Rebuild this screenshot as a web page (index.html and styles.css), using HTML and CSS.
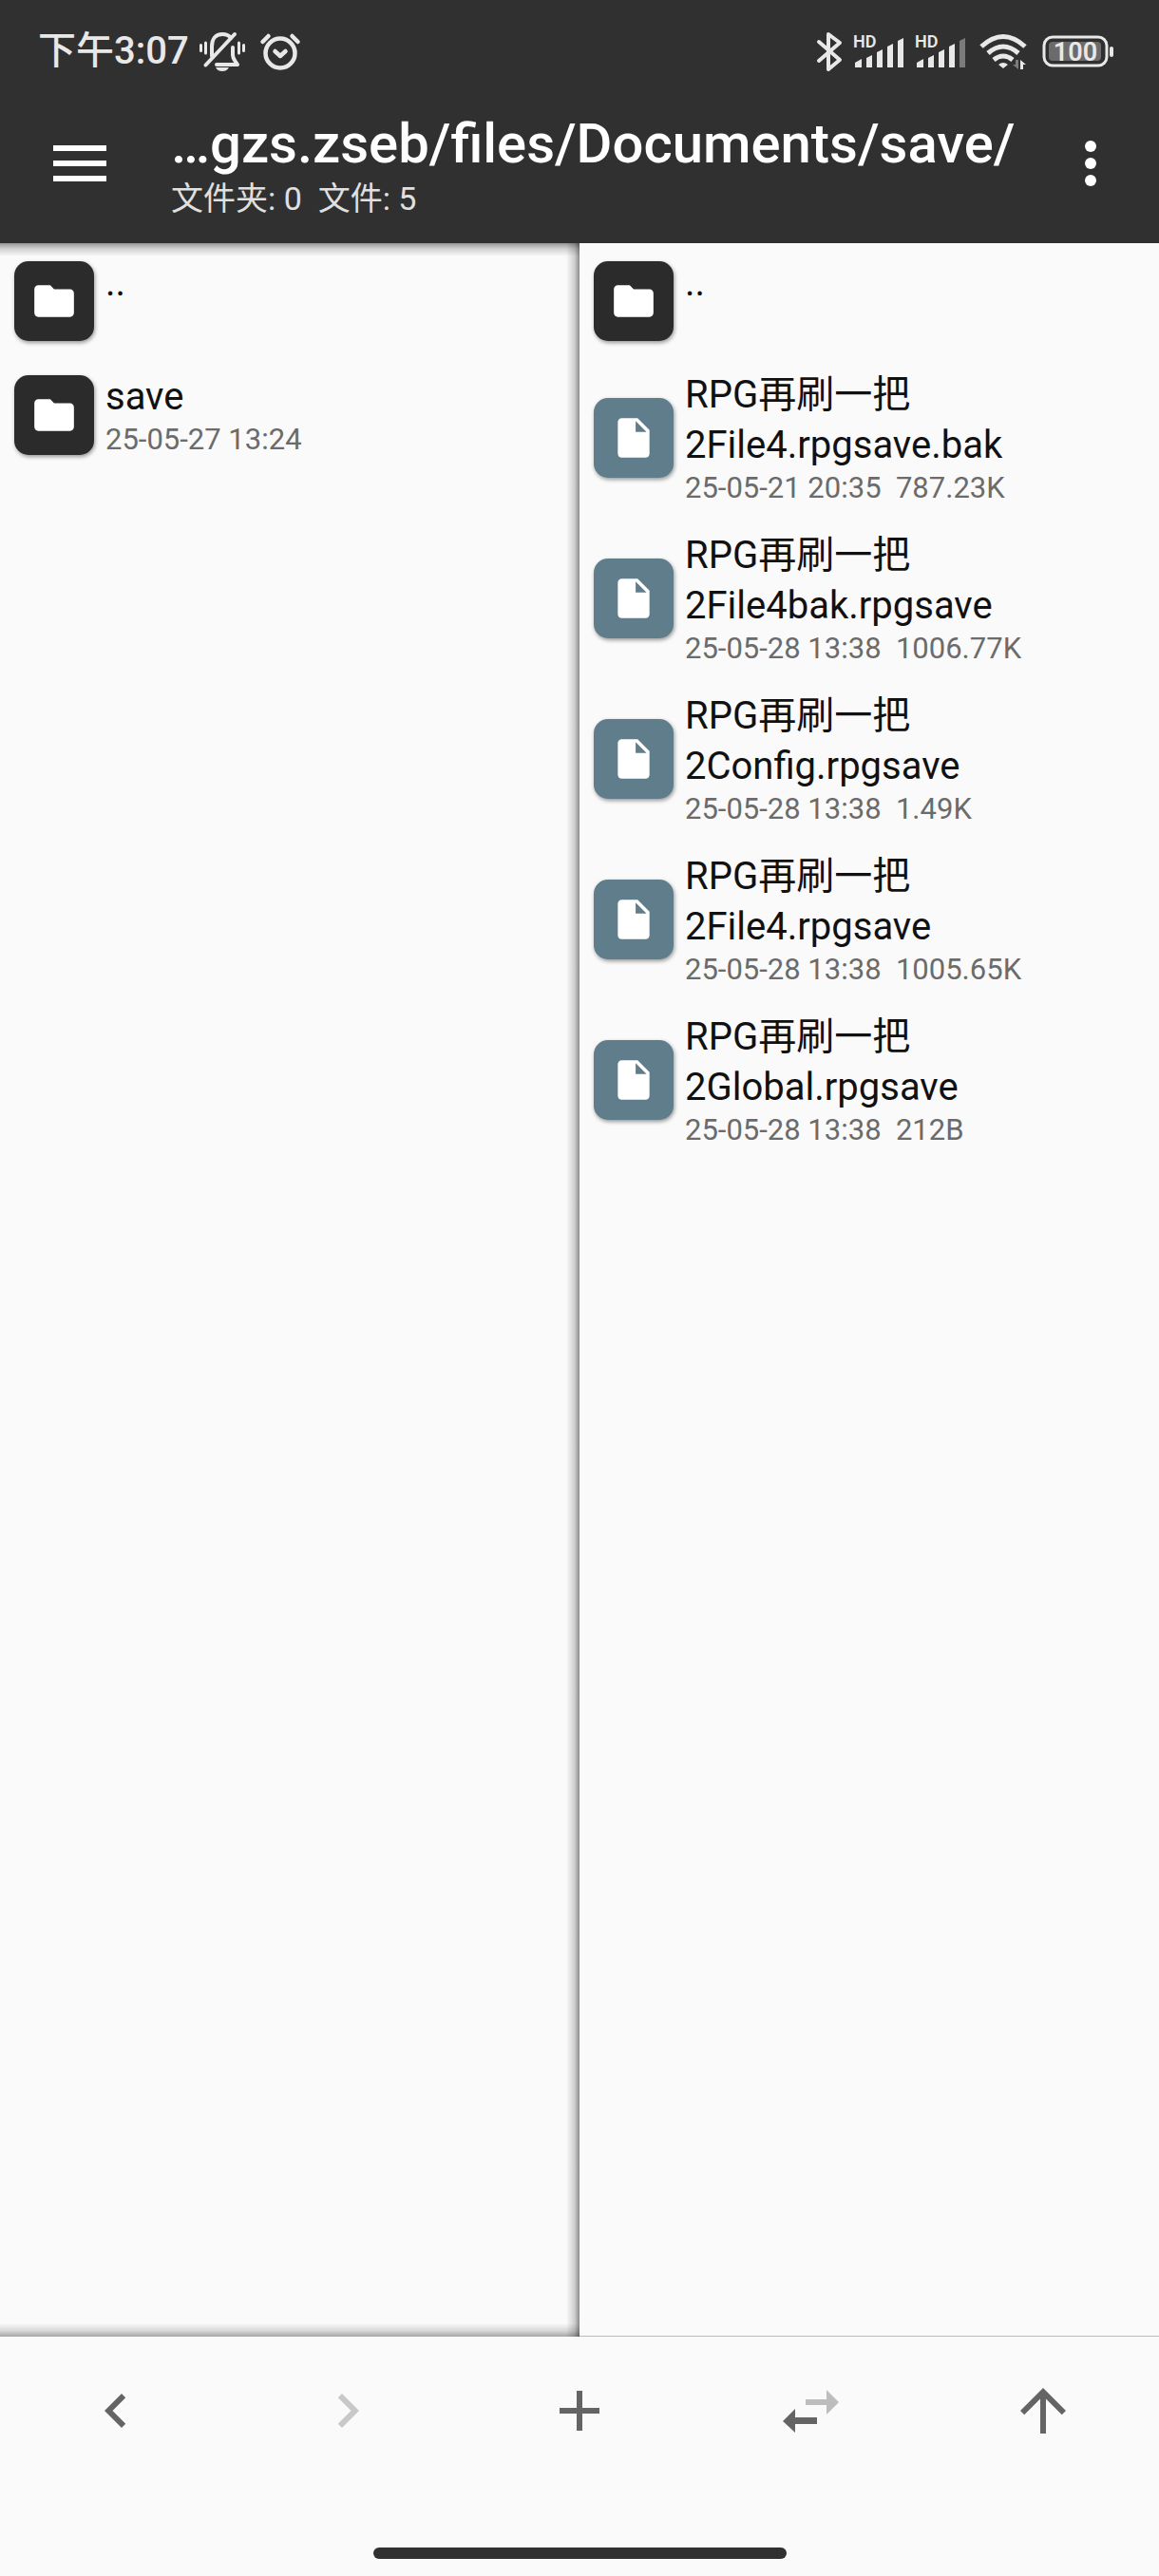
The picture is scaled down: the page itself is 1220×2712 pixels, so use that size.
FILE: index.html
```html
<!DOCTYPE html>
<html lang="zh-CN">
<head>
<meta charset="utf-8">
<meta name="viewport" content="width=device-width, initial-scale=1">
<title>save</title>
<link rel="stylesheet" href="styles.css">
</head>
<body>
<svg class="sprite" aria-hidden="true">
  <symbol id="folder" viewBox="0 0 24 24"><path d="M10 4H4c-1.100 0-2 .9-2 2v12c0 1.100.9 2 2 2h16c1.100 0 2-.9 2-2V8c0-1.100-.9-2-2-2h-8z"/></symbol>
  <symbol id="file" viewBox="0 0 24 24"><path d="M6 2c-1.100 0-2 .9-2 2v16c0 1.100.9 2 2 2h12c1.100 0 2-.9 2-2V8l-6-6zm7 7V3.500L18.500 9z"/></symbol>
</svg>

<header class="top">
  <div class="status">
    <div class="status-group">
      <span class="clock">下午3:07</span>
      <svg class="bell" width="50" height="44" viewBox="0 0 50 44" fill="none" stroke="#e8e8e8" stroke-width="4" stroke-linecap="round" stroke-linejoin="round" aria-label="静音">
        <path d="M14 27V17C14 9 18 4 25 4c4 0 7 1 9 4M36 18v8c0 4 2 5 5 10H19"/>
        <path d="M7.500 36.500 38 4"/>
        <path stroke-width="3" d="M2.500 15.500v6M7.500 13v11M42.500 13v11M47.500 15.500v6"/>
        <path fill="#e8e8e8" stroke="none" d="M18 39h14c-2 3-4 4-7 4s-5-1-7-4z"/>
      </svg>
      <svg class="alarm" width="44" height="42" viewBox="0 0 44 42" fill="none" stroke="#e8e8e8" stroke-width="4.500" stroke-linecap="round" stroke-linejoin="round" aria-label="闹钟">
        <circle cx="22" cy="23" r="15.500"/>
        <path d="M3.500 11l6-6M40.500 11l-6-6M16.500 21l5.500 5 5.500-5"/>
      </svg>
    </div>
    <div class="status-group">
      <svg width="28" height="44" viewBox="0 0 28 44" fill="none" stroke="#e8e8e8" stroke-width="4" stroke-linecap="round" stroke-linejoin="round" aria-label="蓝牙">
        <path d="M3 12l22 19-12 10V4l12 9L3 32"/>
      </svg>
      <svg class="signal" width="55" height="48" viewBox="0 -6 55 48" fill="#e8e8e8" aria-label="信号">
        <text class="hd" x="1" y="14">HD</text>
        <path d="M3 35v-5l7-4v9zM15 35V25l6-3v13zM26 35V19l6-3v19zM37 35V13l6-3v25zM48 35V7l6-3v31z"/>
      </svg>
      <svg class="signal" width="55" height="48" viewBox="0 -6 55 48" fill="#e8e8e8" aria-label="信号">
        <text class="hd" x="1" y="14">HD</text>
        <path d="M3 35v-5l7-4v9zM15 35V25l6-3v13zM26 35V19l6-3v19zM37 35V13l6-3v25z"/>
        <path fill="#7b7b7b" d="M48 35V7l6-3v31z"/>
      </svg>
      <svg class="wifi" width="50" height="38" viewBox="0 0 50 38" fill="none" stroke="#e8e8e8" stroke-width="5" aria-label="无线网络">
        <path d="M2 14Q25-7 48 14M9 21q16-14 32 0M15 28q10-8 20 0"/>
        <path fill="#e8e8e8" stroke="none" d="M20 33q5-4 10 0l-5 4z"/>
        <path fill="#7b7b7b" stroke="none" d="M38 28h3v10l-6-5h3z"/>
        <path fill="#e8e8e8" stroke="none" d="M43 38V28l6 5h-3v5z"/>
      </svg>
      <svg class="battery" width="76" height="34" viewBox="0 0 76 34" aria-label="电量">
        <rect x="2" y="2" width="66" height="30" rx="9" fill="none" stroke="#e8e8e8" stroke-width="3"/>
        <rect x="7" y="7" width="55" height="20" rx="4" fill="#6b6b6b"/>
        <rect x="71" y="12" width="4" height="11" rx="2" fill="#e8e8e8"/>
        <text class="charge" x="35" y="27" text-anchor="middle">100</text>
      </svg>
    </div>
  </div>
  <div class="appbar">
    <button class="menu" type="button" aria-label="菜单">
      <svg width="56" height="38" viewBox="0 0 56 38"><path d="M0 0h56v6H0zM0 16h56v6H0zM0 32h56v6H0z"/></svg>
    </button>
    <div class="heading">
      <h1 class="path">…gzs.zseb/files/Documents/save/</h1>
      <p class="count">文件夹: 0&nbsp; 文件: 5</p>
    </div>
    <button class="more" type="button" aria-label="更多">
      <svg width="12" height="48" viewBox="0 0 12 48"><circle cx="6" cy="6" r="6"/><circle cx="6" cy="24" r="6"/><circle cx="6" cy="42" r="6"/></svg>
    </button>
  </div>
</header>

<main class="panes">
  <ul class="pane pane-back">
    <li><a class="entry" href="#"><span class="tile"><svg><use href="#folder"/></svg></span><span class="text"><span class="name">..</span></span></a></li>
    <li><a class="entry" href="#"><span class="tile"><svg><use href="#folder"/></svg></span><span class="text"><span class="name">save</span><span class="meta">25-05-27 13:24</span></span></a></li>
  </ul>
  <ul class="pane pane-front">
    <li><a class="entry" href="#"><span class="tile"><svg><use href="#folder"/></svg></span><span class="text"><span class="name">..</span></span></a></li>
    <li><a class="entry" href="#"><span class="tile tile-file"><svg><use href="#file"/></svg></span><span class="text"><span class="name">RPG再刷一把2File4.rpgsave.bak</span><span class="meta">25-05-21 20:35&nbsp; 787.23K</span></span></a></li>
    <li><a class="entry" href="#"><span class="tile tile-file"><svg><use href="#file"/></svg></span><span class="text"><span class="name">RPG再刷一把2File4bak.rpgsave</span><span class="meta">25-05-28 13:38&nbsp; 1006.77K</span></span></a></li>
    <li><a class="entry" href="#"><span class="tile tile-file"><svg><use href="#file"/></svg></span><span class="text"><span class="name">RPG再刷一把2Config.rpgsave</span><span class="meta">25-05-28 13:38&nbsp; 1.49K</span></span></a></li>
    <li><a class="entry" href="#"><span class="tile tile-file"><svg><use href="#file"/></svg></span><span class="text"><span class="name">RPG再刷一把2File4.rpgsave</span><span class="meta">25-05-28 13:38&nbsp; 1005.65K</span></span></a></li>
    <li><a class="entry" href="#"><span class="tile tile-file"><svg><use href="#file"/></svg></span><span class="text"><span class="name">RPG再刷一把2Global.rpgsave</span><span class="meta">25-05-28 13:38&nbsp; 212B</span></span></a></li>
  </ul>
</main>

<footer>
  <nav class="toolbar">
    <button type="button" aria-label="后退"><svg viewBox="0 0 24 24"><path d="M15.410 7.410 14 6l-6 6 6 6 1.410-1.410L10.830 12z"/></svg></button>
    <button type="button" aria-label="前进" disabled><svg viewBox="0 0 24 24"><path d="M10 6 8.590 7.410 13.170 12l-4.580 4.590L10 18l6-6z"/></svg></button>
    <button type="button" aria-label="新建"><svg viewBox="0 0 24 24"><path d="M19 13h-6v6h-2v-6H5v-2h6V5h2v6h6z"/></svg></button>
    <button type="button" aria-label="同步"><svg viewBox="0 0 72 72"><path class="faded" d="M30 24h22V14l13 13-13 13V30H30z"/><path d="M6 47l13-13v9h23v7H19v9z"/></svg></button>
    <button type="button" aria-label="上级"><svg viewBox="0 0 24 24"><path d="M4 12l1.410 1.410L11 7.830V20h2V7.830l5.580 5.590L20 12l-8-8z"/></svg></button>
  </nav>
  <div class="gesture"><span class="handle"></span></div>
</footer>
</body>
</html>
```

FILE: styles.css
```css
* { box-sizing: border-box; }

body {
  margin: 0;
  min-height: 100vh;
  display: flex;
  flex-direction: column;
  background: #fafafa;
  color: #111;
  font-family: Roboto, "Noto Sans CJK SC", sans-serif;
}

h1, p, ul { margin: 0; padding: 0; }
ul { list-style: none; }
svg { display: block; flex: none; }
.sprite { position: absolute; width: 0; height: 0; }

button {
  margin: 0;
  padding: 0;
  border: 0;
  background: none;
  display: flex;
  align-items: center;
  justify-content: center;
}

/* Status bar and app bar */
.top { background: #303030; color: #fff; }

.status {
  height: 88px;
  padding: 20px 47px 0 40px;
  display: flex;
  align-items: center;
  justify-content: space-between;
  color: #e8e8e8;
}
.status-group { display: flex; align-items: center; gap: 10px; }
.clock { font-size: 40px; line-height: 48px; font-weight: 500; }
.alarm { margin-left: 4px; }
.wifi { margin-left: 4px; }
.battery { margin-left: 6px; }
.hd { font-size: 18px; font-weight: 600; }
.charge { font-size: 27px; font-weight: 600; fill: #e8e8e8; }

.appbar {
  height: 168px;
  display: flex;
  align-items: center;
}
.menu { width: 168px; height: 168px; fill: #fff; }
.more { width: 144px; height: 168px; fill: #fff; }
.heading { flex: 1; min-width: 0; padding: 6px 0 0 12px; }
.path {
  font-size: 58px;
  line-height: 68px;
  font-weight: 500;
  white-space: nowrap;
}
.count { font-size: 34px; line-height: 48px; color: #e0e0e0; }

/* File panes */
.panes { flex: 1; display: grid; grid-template-columns: 1fr 1fr; }

.pane-back {
  background:
    linear-gradient(to left, rgba(0, 0, 0, .45), rgba(0, 0, 0, .18) 5px, transparent 14px),
    linear-gradient(to bottom, rgba(0, 0, 0, .4), rgba(0, 0, 0, .16) 6px, transparent 14px),
    linear-gradient(to top, rgba(0, 0, 0, .34), rgba(0, 0, 0, .14) 6px, transparent 14px);
}
.pane-front { border-bottom: 1px solid #bbb; }

.entry {
  display: flex;
  align-items: center;
  gap: 12px;
  padding: 13px 24px 12px 15px;
  min-height: 120px;
  color: inherit;
  text-decoration: none;
}
.tile {
  flex: none;
  width: 84px;
  height: 84px;
  border-radius: 15px;
  display: grid;
  place-items: center;
  background: #2b2b2b;
  fill: #fff;
  box-shadow: 1px 2px 4px rgba(0, 0, 0, .4);
}
.tile-file { background: #607d8b; }
.tile svg { width: 50px; height: 50px; }
.text { min-width: 0; min-height: 91px; }
.name, .meta { display: block; }
.name { font-size: 40px; line-height: 53px; }
.meta { font-size: 31px; line-height: 38px; color: #6b6b6b; white-space: nowrap; }

/* Bottom toolbar */
.toolbar { display: grid; grid-template-columns: repeat(5, 1fr); }
.toolbar button { height: 156px; fill: #646464; }
.toolbar button:disabled { fill: #c8c8c8; }
.toolbar svg { width: 72px; height: 72px; }
.faded { fill: #bdbdbd; }

.gesture {
  height: 96px;
  padding-bottom: 18px;
  display: flex;
  align-items: flex-end;
  justify-content: center;
}
.handle { width: 60%; max-width: 435px; height: 12px; border-radius: 6px; background: #303030; }
```
